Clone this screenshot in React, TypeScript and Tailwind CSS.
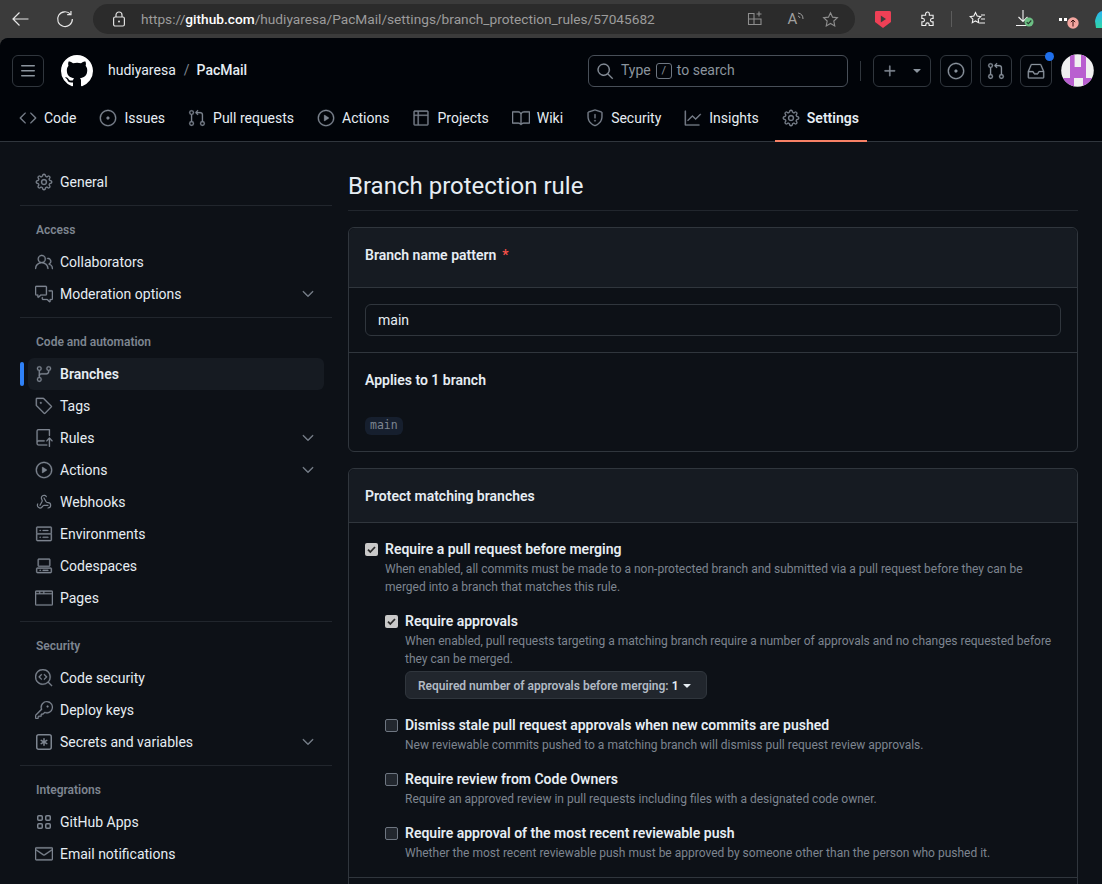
import React from "react";
import {
  GoBook, GoBrowser, GoChevronDown, GoCode, GoCodescan, GoCodespaces, GoCommentDiscussion,
  GoGear, GoGitBranch, GoGitPullRequest, GoGraph, GoInbox, GoIssueOpened, GoKey, GoMail,
  GoPeople, GoPlay, GoPlus, GoRepoPush, GoSearch, GoServer, GoShield, GoTable, GoTag,
  GoTriangleDown,
} from "react-icons/go";
import { Webhook } from "lucide-react";

const font = { fontFamily: "Roboto, sans-serif" };

type IconProps = { size?: number; className?: string };
type IconT = React.ComponentType<IconProps>;

// The octicons in react-icons are the 24px cut: glyph slightly inset and lighter strokes.
const oct = (G: React.ComponentType<any>): IconT => ({ className }: IconProps) => (
  <G size={18} strokeWidth={0.35} className={`m-[-1px] shrink-0 ${className ?? ""}`} />
);

const Book = oct(GoBook), Browser = oct(GoBrowser), Chevron = oct(GoChevronDown), Code = oct(GoCode), Codescan = oct(GoCodescan),
  Codespaces = oct(GoCodespaces), Discussion = oct(GoCommentDiscussion), Gear = oct(GoGear), Branch = oct(GoGitBranch), PR = oct(GoGitPullRequest),
  Graph = oct(GoGraph), Inbox = oct(GoInbox), Issue = oct(GoIssueOpened), Key = oct(GoKey), Mail = oct(GoMail), People = oct(GoPeople), Play = oct(GoPlay),
  Plus = oct(GoPlus), RepoPush = oct(GoRepoPush), Search = oct(GoSearch), Server = oct(GoServer), Shield = oct(GoShield), Table = oct(GoTable), Tag = oct(GoTag);

const MarkGithub = ({ size = 16, className }: IconProps) => (
  <svg width={size} height={size} viewBox="0 0 16 16" fill="currentColor" className={className}><path d="M8 0c4.42 0 8 3.58 8 8a8.013 8.013 0 0 1-5.45 7.59c-.4.08-.55-.17-.55-.38 0-.27.01-1.13.01-2.2 0-.75-.25-1.23-.54-1.48 1.78-.2 3.65-.88 3.65-3.95 0-.88-.31-1.59-.82-2.15.08-.2.36-1.02-.08-2.12 0 0-.67-.22-2.2.82-.64-.18-1.32-.27-2-.27-.68 0-1.36.09-2 .27-1.53-1.03-2.2-.82-2.2-.82-.44 1.1-.16 1.92-.08 2.12-.51.56-.82 1.28-.82 2.15 0 3.06 1.86 3.75 3.64 3.95-.23.2-.44.55-.51 1.07-.46.21-1.61.55-2.33-.66-.15-.24-.6-.83-1.23-.82-.67.01-.27.38.01.53.34.19.73.9.82 1.13.16.45.68 1.31 2.69.94 0 .67.01 1.3.01 1.49 0 .21-.15.45-.55.38A7.995 7.995 0 0 1 0 8c0-4.42 3.58-8 8-8Z" /></svg>
);
const ThreeBars = ({ size = 16, className }: IconProps) => (
  <svg width={size} height={size} viewBox="0 0 16 16" fill="currentColor" className={className}><path d="M1 2.75A.75.75 0 0 1 1.75 2h12.5a.75.75 0 0 1 0 1.5H1.75A.75.75 0 0 1 1 2.75Zm0 5A.75.75 0 0 1 1.75 7h12.5a.75.75 0 0 1 0 1.5H1.75A.75.75 0 0 1 1 7.75ZM1.75 12h12.5a.75.75 0 0 1 0 1.5H1.75a.75.75 0 0 1 0-1.5Z" /></svg>
);
const KeyAsterisk = ({ size = 16, className }: IconProps) => (
  <svg width={size} height={size} viewBox="0 0 16 16" fill="currentColor" className={className}><path d="M0 2.75A2.75 2.75 0 0 1 2.75 0h10.5A2.75 2.75 0 0 1 16 2.75v10.5A2.75 2.75 0 0 1 13.25 16H2.75A2.75 2.75 0 0 1 0 13.25ZM2.75 1.5c-.69 0-1.25.56-1.25 1.25v10.5c0 .69.56 1.25 1.25 1.25h10.5c.69 0 1.25-.56 1.25-1.25V2.75c0-.69-.56-1.25-1.25-1.25Z" /><path d="M8 4a.75.75 0 0 1 .75.75V6.7l1.69-.975a.75.75 0 0 1 .75 1.3L9.5 8l1.69.976a.75.75 0 0 1-.75 1.298L8.75 9.3v1.951a.75.75 0 0 1-1.5 0V9.299l-1.69.976a.75.75 0 0 1-.75-1.3L6.5 8l-1.69-.975a.75.75 0 0 1 .75-1.3l1.69.976V4.75A.75.75 0 0 1 8 4Z" /></svg>
);
const Apps = ({ size = 16, className }: IconProps) => (
  <svg width={size} height={size} viewBox="0 0 16 16" fill="none" stroke="currentColor" strokeWidth="1.5" className={className}>
    <rect x="1.75" y="1.75" width="4.5" height="4.5" rx="1" /><rect x="9.75" y="1.75" width="4.5" height="4.5" rx="1" />
    <rect x="1.75" y="9.75" width="4.5" height="4.5" rx="1" /><rect x="9.75" y="9.75" width="4.5" height="4.5" rx="1" />
  </svg>
);
const WebhookIcon = ({ size = 16, className }: IconProps) => <Webhook size={size} strokeWidth={1.8} className={className} />;

function BrowserBar() {
  return (
    <div className="flex h-[38px] items-center bg-[#3b3b3b] pl-[12px] text-[#d6d6d6]">
      <svg width="17" height="16" viewBox="0 0 17 16" fill="none" stroke="#e6e6e6" strokeWidth="1.2"><path d="M16.5 8H1M7.5 1.5 1 8l6.5 6.5" /></svg>
      <svg className="ml-[27px]" width="18" height="18" viewBox="0 0 18 18" fill="none" stroke="#e6e6e6" strokeWidth="1.2"><path d="M14.5 4.2A7.4 7.4 0 1 0 16.4 9" /><path d="M15 1v3.6h-3.8" /></svg>
      <div className="ml-[19px] flex h-[30px] w-[764px] items-center rounded-full bg-[#2b2b2b] pl-[19px] text-[13.7px]">
        <svg width="14" height="16" viewBox="0 0 14 16" fill="none" stroke="#e0e0e0" strokeWidth="1.2"><rect x="1.6" y="6" width="10.8" height="9" rx="1.5" /><path d="M4 6V4a3 3 0 0 1 6 0v2" /><circle cx="7" cy="10.5" r="1" fill="#e0e0e0" stroke="none" /></svg>
        <span className="ml-[15px] whitespace-nowrap text-[#9c9c9c]">https://<span className="font-medium text-white">github.com</span>/hudiyaresa/PacMail/settings/branch_protection_rules/57045682</span>
        <span className="flex-1" />
        <svg width="16" height="16" viewBox="0 0 16 16" fill="none" stroke="#8e8e8e" strokeWidth="1.1"><path d="M1.5 2.5h5.5v11h-5.5zM7 8h7v5.5H7M1.5 8H7M12 .5v5M9.5 3h5" /></svg>
        <span className="ml-[24px] flex items-start text-[15px] leading-none text-[#a0a0a0]">A
          <svg width="7" height="9" viewBox="0 0 7 9" fill="none" stroke="#a0a0a0" strokeWidth="1"><path d="M1 4a3 3 0 0 1 2 2M1 1a6 6 0 0 1 5 6" /></svg>
        </span>
        <svg className="ml-[18px]" width="17" height="17" viewBox="0 0 24 24" fill="none" stroke="#8e8e8e" strokeWidth="1.6"><path d="m12 2.5 2.9 6.2 6.8.8-5 4.7 1.3 6.8-6-3.4-6 3.4 1.3-6.8-5-4.7 6.8-.8z" /></svg>
        <span className="w-[16px]" />
      </div>
      <svg className="ml-[20px]" width="16" height="17" viewBox="0 0 16 17"><path d="M0 1.5A1.5 1.5 0 0 1 1.5 0h13A1.5 1.5 0 0 1 16 1.5V11l-8 6-8-6z" fill="#ef4056" /><path d="M5.8 4.5 11 8l-5.2 3.5z" fill="#3b3b3b" /></svg>
      <svg className="ml-[29px]" width="15" height="16" viewBox="0 0 16 16" fill="none" stroke="#f2f2f2" strokeWidth="1.2"><path d="M6 2.5a2 2 0 0 1 4 0V4h4v3.5h-1a1.6 1.6 0 0 0 0 3.6h1V15H9.8v-1a1.8 1.8 0 0 0-3.6 0v1H2v-4h1a1.6 1.6 0 0 0 0-3.5H2V4h4z" /></svg>
      <div className="ml-[16px] h-[16px] w-px bg-[#5c5c5c]" />
      <svg className="ml-[17px]" width="17" height="16" viewBox="0 0 17 16" fill="none" stroke="#f2f2f2" strokeWidth="1.1"><path d="m6.5 1.5 1.7 3.6 3.6.5-2.6 2.5.6 3.6-3.3-1.8-3.2 1.8.6-3.6L1.2 5.6l3.6-.5z" /><path d="M12 4h4M12 8h4M10.5 12H16" /></svg>
      <div className="relative ml-[30px] h-[18px] w-[16px]">
        <svg width="14" height="17" viewBox="0 0 14 17" fill="none" stroke="#f2f2f2" strokeWidth="1.1"><path d="M7 0v11M2.5 7 7 11.5 11.5 7M0 15.5h12" /></svg>
        <svg className="absolute left-[8px] top-[7px]" width="10" height="10" viewBox="0 0 10 10"><circle cx="5" cy="5" r="4.5" fill="#6cbf84" /><path d="m2.7 5.1 1.6 1.6 3-3.2" fill="none" stroke="#2a3a30" strokeWidth="1.1" /></svg>
      </div>
      <div className="relative ml-[27px] h-[18px] w-[26px]">
        <span className="absolute left-0 top-[8px] flex gap-[2px]"><i className="h-[3px] w-[3px] bg-white" /><i className="h-[3px] w-[3px] bg-white" /></span>
        <svg className="absolute left-[8px] top-[7px]" width="12" height="12" viewBox="0 0 12 12"><circle cx="6" cy="6" r="5.7" fill="#f4a6a0" /><path d="M6 9.5V3M3.8 5.2 6 3l2.2 2.2" fill="none" stroke="#3b1512" strokeWidth="1" /></svg>
      </div>
      <svg className="ml-[10px] shrink-0" width="7" height="17" viewBox="0 0 7 17">
        <linearGradient id="cp" x1="0" y1="0" x2="0" y2="1"><stop offset="0" stopColor="#2bb4f2" /><stop offset="1" stopColor="#2fd6a8" /></linearGradient>
        <path d="M7 0C3 1 1 5 0 10l1 7h6z" fill="url(#cp)" />
      </svg>
    </div>
  );
}

function IconBtn({ children, className = "w-[32px]" }: { children: React.ReactNode; className?: string }) {
  return <div className={`relative flex h-[32px] items-center justify-center rounded-md border border-[#30363d] text-[#8b949e] ${className}`}>{children}</div>;
}

const tabs: [string, IconT][] = [
  ["Code", Code], ["Issues", Issue], ["Pull requests", PR], ["Actions", Play],
  ["Projects", Table], ["Wiki", Book], ["Security", Shield], ["Insights", Graph], ["Settings", Gear],
];

function Avatar() {
  return (
    <svg className="ml-[9px]" width="33" height="33" viewBox="0 0 33 33">
      <clipPath id="av"><circle cx="16.5" cy="16.5" r="16.3" /></clipPath>
      <g clipPath="url(#av)">
        <rect width="33" height="33" fill="#f0f0f0" />
        <path d="M9 1h4.6v12h6.4V1h5v23H9z" fill="#b95fd0" />
        <path d="M0 24h13v9H0zM22 24h11v9H22z" fill="#b95fd0" />
      </g>
    </svg>
  );
}

function Header() {
  return (
    <div className="rounded-tl-lg border-b border-[#30363d] bg-[#010409]">
      <div className="flex items-center pl-[12px] pr-[8px] pt-[16px]">
        <IconBtn><ThreeBars size={16} /></IconBtn>
        <MarkGithub size={32} className="ml-[17px] text-white" />
        <span className="ml-[15px] text-[14px] text-[#e6edf3]">hudiyaresa</span>
        <span className="ml-[8px] text-[14px] text-[#7d8590]">/</span>
        <span className="ml-[7px] text-[14px] font-medium text-[#e6edf3]">PacMail</span>
        <span className="flex-1" />
        <div className="flex h-[32px] w-[260px] items-center rounded-md border border-[#484f58] px-[8px] text-[14px] text-[#8b949e]">
          <Search />
          <span className="ml-[8px]">Type</span>
          <span className="mx-[5px] flex h-[16px] w-[16px] items-center justify-center rounded-[3px] border border-[#6e7681] text-[11px] leading-none">/</span>
          <span>to search</span>
        </div>
        <div className="mx-[12px] h-[20px] w-px bg-[#30363d]" />
        <IconBtn className="w-[58px] gap-[12px] pl-[2px]"><Plus /><GoTriangleDown size={14} /></IconBtn>
        <IconBtn className="ml-[9px] w-[32px]"><Issue /></IconBtn>
        <IconBtn className="ml-[8px] w-[32px]"><PR /></IconBtn>
        <IconBtn className="ml-[8px] w-[32px]">
          <Inbox />
          <span className="absolute right-[-3px] top-[-4px] h-[9px] w-[9px] rounded-full bg-[#1f6feb]" />
        </IconBtn>
        <Avatar />
      </div>
      <nav className="flex gap-[8px] pb-[7px] pl-[12px] pt-[15px]">
        {tabs.map(([label, Icon]) => {
          const on = label === "Settings";
          return (
            <div key={label} className="relative flex h-[32px] items-center gap-[8px] px-[8px] text-[14px] text-[#e6edf3]">
              <Icon className="text-[#7d8590]" />
              <span className={on ? "font-semibold" : ""}>{label}</span>
              {on && <span className="absolute bottom-[-8px] left-0 right-0 h-[2px] bg-[#f78166]" />}
            </div>
          );
        })}
      </nav>
    </div>
  );
}

function Item({ icon: Icon, label, chevron, active }: { icon: IconT; label: string; chevron?: boolean; active?: boolean }) {
  return (
    <div className={`relative mx-[8px] flex h-[32px] items-center rounded-md pl-[8px] pr-[8px] text-[14px] text-[#e6edf3] ${active ? "bg-[#161b22] font-semibold" : ""}`}>
      {active && <span className="absolute left-[-8px] top-[4px] h-[24px] w-[4px] rounded-md bg-[#2f81f7]" />}
      <Icon size={16} className="text-[#7d8590]" />
      <span className="ml-[8px]">{label}</span>
      <span className="flex-1" />
      {chevron && <Chevron className="text-[#7d8590]" />}
    </div>
  );
}

function Section({ title }: { title: string }) {
  return (
    <>
      <div className="mt-[7px] h-px bg-[#21262d]" />
      <div className="mb-[4px] mt-[12px] flex h-[24px] items-center px-[16px] text-[12px] font-semibold text-[#7d8590]">{title}</div>
    </>
  );
}

function Sidebar() {
  return (
    <aside className="w-[312px] shrink-0 pt-[24px]">
      <Item icon={Gear} label="General" />
      <Section title="Access" />
      <Item icon={People} label="Collaborators" />
      <Item icon={Discussion} label="Moderation options" chevron />
      <Section title="Code and automation" />
      <Item icon={Branch} label="Branches" active />
      <Item icon={Tag} label="Tags" />
      <Item icon={RepoPush} label="Rules" chevron />
      <Item icon={Play} label="Actions" chevron />
      <Item icon={WebhookIcon} label="Webhooks" />
      <Item icon={Server} label="Environments" />
      <Item icon={Codespaces} label="Codespaces" />
      <Item icon={Browser} label="Pages" />
      <Section title="Security" />
      <Item icon={Codescan} label="Code security" />
      <Item icon={Key} label="Deploy keys" />
      <Item icon={KeyAsterisk} label="Secrets and variables" chevron />
      <Section title="Integrations" />
      <Item icon={Apps} label="GitHub Apps" />
      <Item icon={Mail} label="Email notifications" />
    </aside>
  );
}

function Rule({ checked, title, desc, children }: { checked?: boolean; title: string; desc: React.ReactNode; children?: React.ReactNode }) {
  return (
    <div className="flex">
      <div className="flex h-[20px] w-[20px] shrink-0 items-center">
        {checked ? (
          <span className="flex h-[13px] w-[13px] items-center justify-center rounded-[2px] bg-[#c9c9c9]">
            <svg width="11" height="11" viewBox="0 0 11 11" fill="none" stroke="#2b2b2b" strokeWidth="1.8"><path d="m2 5.7 2.3 2.3L9 3" /></svg>
          </span>
        ) : (
          <span className="h-[13px] w-[13px] rounded-[2px] border border-[#6e7681] bg-[#22272e]" />
        )}
      </div>
      <div className="min-w-0 flex-1">
        <div className="text-[14px] font-semibold leading-[20px] text-[#e6edf3]">{title}</div>
        <div className="mb-[-1px] mt-[1px] text-[12px] leading-[18px] text-[#7d8590]">{desc}</div>
        {children}
      </div>
    </div>
  );
}

function Main() {
  return (
    <main className="ml-[16px] w-[730px] shrink-0 pt-[26px]">
      <h1 className="border-b border-[#21262d] pb-[6px] text-[24px] leading-[36px] text-[#e6edf3]">Branch protection rule</h1>
      <section className="mt-[16px] rounded-md border border-[#30363d]">
        <div className="flex h-[60px] items-center rounded-t-md border-b border-[#30363d] bg-[#161b22] px-[16px] pb-[4px] text-[14px] font-semibold text-[#e6edf3]">
          Branch name pattern<span className="ml-[6px] text-[#f85149]">*</span>
        </div>
        <div className="border-b border-[#30363d] p-[16px]">
          <div className="flex h-[32px] items-center rounded-md border border-[#30363d] bg-[#0d1117] px-[12px] text-[14px] text-[#e6edf3]">main</div>
        </div>
        <div className="h-[98px] px-[16px] pt-[17px]">
          <div className="text-[14px] font-semibold leading-[20px] text-[#e6edf3]">Applies to 1 branch</div>
          <code className="mt-[27px] inline-flex h-[18px] items-center rounded-md bg-[#161f2e] px-[5px] text-[11.5px] text-[#7d8590]" style={{ fontFamily: "'DejaVu Sans Mono', monospace" }}>main</code>
        </div>
      </section>
      <section className="mt-[16px] rounded-t-md border border-[#30363d]">
        <div className="flex h-[54px] items-center rounded-t-md border-b border-[#30363d] bg-[#161b22] px-[16px] pt-[2px] text-[14px] font-semibold text-[#e6edf3]">Protect matching branches</div>
        <div className="flex flex-col gap-[16px] border-b border-[#30363d] px-[16px] py-[16px]">
          <Rule checked title="Require a pull request before merging" desc="When enabled, all commits must be made to a non-protected branch and submitted via a pull request before they can be merged into a branch that matches this rule.">
            <div className="mt-[16px] flex flex-col gap-[16px]">
              <Rule checked title="Require approvals" desc="When enabled, pull requests targeting a matching branch require a number of approvals and no changes requested before they can be merged.">
                <div className="mt-[4px] inline-flex h-[28px] items-center rounded-md border border-[#30363d] bg-[#21262d] px-[12px] pt-[1px] text-[12px] font-semibold text-[#b1bac4]">
                  Required number of approvals before merging:<span className="ml-[3px] text-[#e6edf3]">1</span><GoTriangleDown size={14} className="ml-[1px] text-[#e6edf3]" />
                </div>
              </Rule>
              <Rule title="Dismiss stale pull request approvals when new commits are pushed" desc="New reviewable commits pushed to a matching branch will dismiss pull request review approvals." />
              <Rule title="Require review from Code Owners" desc="Require an approved review in pull requests including files with a designated code owner." />
              <Rule title="Require approval of the most recent reviewable push" desc="Whether the most recent reviewable push must be approved by someone other than the person who pushed it." />
            </div>
          </Rule>
        </div>
        <div className="h-[40px]" />
      </section>
    </main>
  );
}

export default function App() {
  return (
    <div className="h-[884px] w-[1102px] overflow-hidden bg-[#3b3b3b]" style={font}>
      <BrowserBar />
      <div className="h-[846px] overflow-hidden rounded-tl-lg bg-[#0d1117]">
        <Header />
        <div className="flex pl-[20px]">
          <Sidebar />
          <Main />
        </div>
      </div>
    </div>
  );
}
